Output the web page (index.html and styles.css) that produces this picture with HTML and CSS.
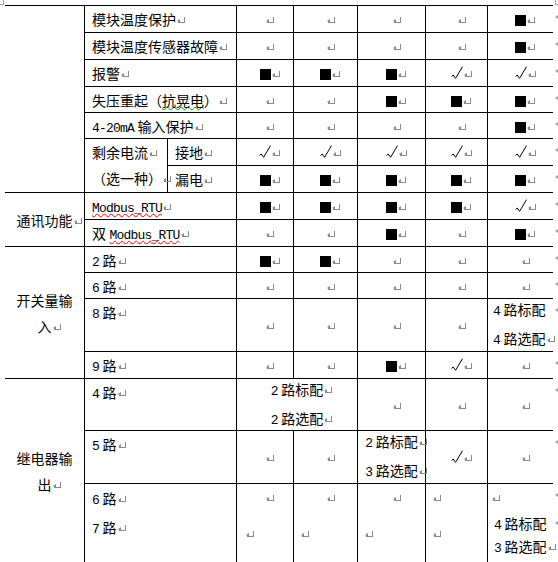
FILE: index.html
```html
<!DOCTYPE html>
<html lang="zh-CN">
<head>
<meta charset="utf-8">
<title>功能对照表</title>
<link rel="stylesheet" href="styles.css">
</head>
<body>
<div class="crop"><i class="crop-l"></i><i class="crop-r"></i></div>
<div class="tbl">
  <!-- R1 -->
  <div class="c cat r7"></div>
  <div class="c lab s2">模块温度保护<i class="pm"></i></div>
  <div class="c v"><p><i class="pm"></i></p></div>
  <div class="c v"><p><i class="pm"></i></p></div>
  <div class="c v"><p><i class="pm"></i></p></div>
  <div class="c v"><p><i class="pm"></i></p></div>
  <div class="c v"><p><i class="sq"></i><i class="pm"></i></p></div>
  <div class="m"><i class="em"></i></div>
  <!-- R2 -->
  <div class="c lab s2">模块温度传感器故障<i class="pm"></i></div>
  <div class="c v"><p><i class="pm"></i></p></div>
  <div class="c v"><p><i class="pm"></i></p></div>
  <div class="c v"><p><i class="pm"></i></p></div>
  <div class="c v"><p><i class="pm"></i></p></div>
  <div class="c v"><p><i class="sq"></i><i class="pm"></i></p></div>
  <div class="m"><i class="em"></i></div>
  <!-- R3 -->
  <div class="c lab s2">报警<i class="pm"></i></div>
  <div class="c v"><p><i class="sq"></i><i class="pm"></i></p></div>
  <div class="c v"><p><i class="sq"></i><i class="pm"></i></p></div>
  <div class="c v"><p><i class="sq"></i><i class="pm"></i></p></div>
  <div class="c v"><p><svg class="ck" viewBox="0 0 12 13"><path d="M0.5 10.5 L2.2 9 L4.6 12.3 L11.5 0.6"/></svg><i class="pm"></i></p></div>
  <div class="c v"><p><svg class="ck" viewBox="0 0 12 13"><path d="M0.5 10.5 L2.2 9 L4.6 12.3 L11.5 0.6"/></svg><i class="pm"></i></p></div>
  <div class="m"><i class="em"></i></div>
  <!-- R4 -->
  <div class="c lab s2">失压重起（<span class="sp-g">抗晃电</span>）<i class="pm"></i></div>
  <div class="c v"><p><i class="pm"></i></p></div>
  <div class="c v"><p><i class="pm"></i></p></div>
  <div class="c v"><p><i class="sq"></i><i class="pm"></i></p></div>
  <div class="c v"><p><i class="sq"></i><i class="pm"></i></p></div>
  <div class="c v"><p><i class="sq"></i><i class="pm"></i></p></div>
  <div class="m"><i class="em"></i></div>
  <!-- R5 -->
  <div class="c lab s2"><span class="en as">4-20mA</span>输入保护<i class="pm"></i></div>
  <div class="c v"><p><i class="pm"></i></p></div>
  <div class="c v"><p><i class="pm"></i></p></div>
  <div class="c v"><p><i class="pm"></i></p></div>
  <div class="c v"><p><i class="pm"></i></p></div>
  <div class="c v"><p><i class="sq"></i><i class="pm"></i></p></div>
  <div class="m"><i class="em"></i></div>
  <!-- R6 -->
  <div class="c lab r2"><p>剩余电流<i class="pm"></i></p><p>（选一种）<i class="pm"></i></p></div>
  <div class="c lab">接地<i class="pm"></i></div>
  <div class="c v"><p><svg class="ck" viewBox="0 0 12 13"><path d="M0.5 10.5 L2.2 9 L4.6 12.3 L11.5 0.6"/></svg><i class="pm"></i></p></div>
  <div class="c v"><p><svg class="ck" viewBox="0 0 12 13"><path d="M0.5 10.5 L2.2 9 L4.6 12.3 L11.5 0.6"/></svg><i class="pm"></i></p></div>
  <div class="c v"><p><svg class="ck" viewBox="0 0 12 13"><path d="M0.5 10.5 L2.2 9 L4.6 12.3 L11.5 0.6"/></svg><i class="pm"></i></p></div>
  <div class="c v"><p><svg class="ck" viewBox="0 0 12 13"><path d="M0.5 10.5 L2.2 9 L4.6 12.3 L11.5 0.6"/></svg><i class="pm"></i></p></div>
  <div class="c v"><p><svg class="ck" viewBox="0 0 12 13"><path d="M0.5 10.5 L2.2 9 L4.6 12.3 L11.5 0.6"/></svg><i class="pm"></i></p></div>
  <div class="m"><i class="em"></i></div>
  <!-- R7 -->
  <div class="c lab">漏电<i class="pm"></i></div>
  <div class="c v"><p><i class="sq"></i><i class="pm"></i></p></div>
  <div class="c v"><p><i class="sq"></i><i class="pm"></i></p></div>
  <div class="c v"><p><i class="sq"></i><i class="pm"></i></p></div>
  <div class="c v"><p><i class="sq"></i><i class="pm"></i></p></div>
  <div class="c v"><p><i class="sq"></i><i class="pm"></i></p></div>
  <div class="m"><i class="em"></i></div>
  <!-- R8 -->
  <div class="c cat r2"><p>通讯功能<i class="pm"></i></p></div>
  <div class="c lab s2"><span class="en sp-r">Modbus_RTU</span><i class="pm"></i></div>
  <div class="c v"><p><i class="sq"></i><i class="pm"></i></p></div>
  <div class="c v"><p><i class="sq"></i><i class="pm"></i></p></div>
  <div class="c v"><p><i class="sq"></i><i class="pm"></i></p></div>
  <div class="c v"><p><i class="sq"></i><i class="pm"></i></p></div>
  <div class="c v"><p><svg class="ck" viewBox="0 0 12 13"><path d="M0.5 10.5 L2.2 9 L4.6 12.3 L11.5 0.6"/></svg><i class="pm"></i></p></div>
  <div class="m"><i class="em"></i></div>
  <!-- R9 -->
  <div class="c lab s2">双<span class="en asl sp-r">Modbus_RTU</span><i class="pm"></i></div>
  <div class="c v"><p><i class="pm"></i></p></div>
  <div class="c v"><p><i class="pm"></i></p></div>
  <div class="c v"><p><i class="sq"></i><i class="pm"></i></p></div>
  <div class="c v"><p><i class="pm"></i></p></div>
  <div class="c v"><p><i class="sq"></i><i class="pm"></i></p></div>
  <div class="m"><i class="em"></i></div>
  <!-- R10 -->
  <div class="c cat r4"><p>开关量输<br>入<i class="pm"></i></p></div>
  <div class="c lab s2"><span class="en as">2</span>路<i class="pm"></i></div>
  <div class="c v"><p><i class="sq"></i><i class="pm"></i></p></div>
  <div class="c v"><p><i class="sq"></i><i class="pm"></i></p></div>
  <div class="c v"><p><i class="pm"></i></p></div>
  <div class="c v"><p><i class="pm"></i></p></div>
  <div class="c v"><p><i class="pm"></i></p></div>
  <div class="m"><i class="em"></i></div>
  <!-- R11 -->
  <div class="c lab s2"><span class="en as">6</span>路<i class="pm"></i></div>
  <div class="c v"><p><i class="pm"></i></p></div>
  <div class="c v"><p><i class="pm"></i></p></div>
  <div class="c v"><p><i class="pm"></i></p></div>
  <div class="c v"><p><i class="pm"></i></p></div>
  <div class="c v"><p><i class="pm"></i></p></div>
  <div class="m"><i class="em"></i></div>
  <!-- R12 -->
  <div class="c lab s2"><span class="en as">8</span>路<i class="pm"></i></div>
  <div class="c v"><p><i class="pm"></i></p></div>
  <div class="c v"><p><i class="pm"></i></p></div>
  <div class="c v"><p><i class="pm"></i></p></div>
  <div class="c v"><p><i class="pm"></i></p></div>
  <div class="c v left"><p><span class="en as">4</span>路标配<br><span class="en as">4</span>路选配<i class="pm"></i></p></div>
  <div class="m"><i class="em"></i></div>
  <!-- R13 -->
  <div class="c lab s2"><span class="en as">9</span>路<i class="pm"></i></div>
  <div class="c v"><p><i class="pm"></i></p></div>
  <div class="c v"><p><i class="pm"></i></p></div>
  <div class="c v"><p><i class="sq"></i><i class="pm"></i></p></div>
  <div class="c v"><p><svg class="ck" viewBox="0 0 12 13"><path d="M0.5 10.5 L2.2 9 L4.6 12.3 L11.5 0.6"/></svg><i class="pm"></i></p></div>
  <div class="c v"><p><i class="pm"></i></p></div>
  <div class="m"><i class="em"></i></div>
  <!-- R14 -->
  <div class="c cat r3"><p>继电器输<br>出<i class="pm"></i></p></div>
  <div class="c lab s2"><span class="en as">4</span>路<i class="pm"></i></div>
  <div class="c v s2"><p><span class="en as">2</span>路标配<i class="pm"></i></p><p><span class="en as">2</span>路选配<i class="pm"></i></p></div>
  <div class="c v"><p><i class="pm"></i></p></div>
  <div class="c v"><p><i class="pm"></i></p></div>
  <div class="c v"><p><i class="pm"></i></p></div>
  <div class="m"><i class="em"></i></div>
  <!-- R15 -->
  <div class="c lab s2"><span class="en as">5</span>路<i class="pm"></i></div>
  <div class="c v"><p><i class="pm"></i></p></div>
  <div class="c v"><p><i class="pm"></i></p></div>
  <div class="c v"><p><span class="en as">2</span>路标配<i class="pm"></i></p><p><span class="en as">3</span>路选配<i class="pm"></i></p></div>
  <div class="c v"><p><svg class="ck" viewBox="0 0 12 13"><path d="M0.5 10.5 L2.2 9 L4.6 12.3 L11.5 0.6"/></svg><i class="pm"></i></p></div>
  <div class="c v"><p><i class="pm"></i></p></div>
  <div class="m"><i class="em"></i></div>
  <!-- R16 -->
  <div class="c lab s2 last"><p><span class="en as">6</span>路<i class="pm"></i></p><p><span class="en as">7</span>路<i class="pm"></i></p></div>
  <div class="c lw"><p class="tc"><i class="pm"></i></p><p class="p2 w7"><i class="pm"></i></p></div>
  <div class="c lw"><p class="tc"><i class="pm"></i></p><p class="p2"><i class="pm"></i></p></div>
  <div class="c lw"><p class="tc"><i class="pm"></i></p><p class="p2"><i class="pm"></i></p></div>
  <div class="c lw"><p class="tl"><i class="pm"></i></p><p class="p2"><i class="pm"></i></p></div>
  <div class="c lw"><p class="tl t3"><i class="pm"></i></p><p class="cfg"><span class="en as">4</span>路标配<br><span class="en as">3</span>路选配<i class="pm"></i></p></div>
  <div class="m"><i class="em"></i><i class="em em2"></i></div>
</div>
</body>
</html>
```

FILE: styles.css
```css
* { box-sizing: border-box; }

html, body {
  margin: 0;
  padding: 0;
  background: #fff;
}

body {
  width: 558px;
  height: 562px;
  overflow: hidden;
  font-family: "Noto Sans CJK SC", "Noto Sans", sans-serif;
  font-size: 14px;
  color: #000;
}

p { margin: 0; }

/* Word text-boundary crop marks */
.crop {
  display: flex;
  justify-content: space-between;
  height: 5px;
}
.crop-l {
  width: 4px;
  height: 5px;
  border-right: 1px solid #a8a8a8;
  border-bottom: 1px solid #a8a8a8;
}
.crop-r {
  width: 3px;
  height: 5px;
  border-left: 1px solid #a8a8a8;
  border-bottom: 1px solid #a8a8a8;
}

/* table grid */
.tbl {
  margin-left: 5px;
  display: grid;
  grid-template-columns: 79px 83px 69px 57px 64px 68px 62px 66px 5px;
  grid-template-rows: 27px 27px 27px 26px 26px 27px 27px 27px 27px 26px 26px 53px 27px 52px 53px 79px;
  line-height: 26px;
  white-space: nowrap;
}

.c {
  border-top: 1px solid #000;
  border-left: 1px solid #000;
}

.s2 { grid-column: span 2; }
.r2 { grid-row: span 2; }
.r3 { grid-row: span 3; }
.r4 { grid-row: span 4; }
.r7 { grid-row: span 7; }

.cat {
  border-left: 0;
  display: flex;
  flex-direction: column;
  justify-content: center;
  text-align: center;
}

.lab { padding-left: 7px; }
.lab.last { padding-top: 1px; }

.v {
  display: flex;
  flex-direction: column;
  justify-content: center;
  text-align: center;
}
.v.left {
  text-align: left;
  padding-left: 5px;
}

/* last row value cells */
.lw { padding-top: 0; }
.lw .tc { text-align: center; }
.lw .tl { padding-left: 6px; }
.lw .tl.t3 { padding-left: 3px; }
.lw .p2 {
  margin-top: 10px;
  padding-left: 6px;
}
.lw .p2.w7 { padding-left: 8px; }
.lw .cfg {
  margin-top: 3px;
  padding-left: 6px;
  line-height: 21px;
}

/* latin runs (half-width, with Asian/Latin auto space) */
.en {
  font-family: "Liberation Mono", "DejaVu Sans Mono", monospace;
  font-size: 13px;
  letter-spacing: -0.8px;
}
.as { margin-right: 3.5px; }
.asl { margin-left: 3.5px; }

/* spelling / grammar squiggles */
.sp-r {
  text-decoration: underline wavy #ff0000;
  text-decoration-thickness: 1px;
  text-underline-offset: 1px;
}
.sp-g {
  text-decoration: underline wavy #00a000;
  text-decoration-thickness: 1px;
  text-underline-offset: 0px;
}

/* paragraph mark */
.pm {
  display: inline-block;
  position: relative;
  width: 0;
  height: 0;
}
.pm::before {
  content: "";
  position: absolute;
  left: 2px;
  top: -8px;
  width: 6px;
  height: 5px;
  border-right: 1px solid #8a8a8a;
  border-bottom: 1px solid #8a8a8a;
}
.pm::after {
  content: "";
  position: absolute;
  left: 1px;
  top: -6px;
  width: 0;
  height: 0;
  border-right: 3px solid #8a8a8a;
  border-top: 2.5px solid transparent;
  border-bottom: 2.5px solid transparent;
}

/* black square */
.sq {
  display: inline-block;
  width: 11px;
  height: 11px;
  background: #000;
  vertical-align: -1px;
}

/* check mark */
.ck {
  width: 12px;
  height: 13px;
  vertical-align: 0;
  fill: none;
  stroke: #000;
  stroke-width: 1;
}

/* end-of-row marks */
.m {
  padding-top: 10px;
  padding-left: 2px;
}
.em {
  display: block;
  width: 0;
  height: 0;
  border-right: 3px solid #a0a0a0;
  border-top: 2px solid transparent;
  border-bottom: 2px solid transparent;
}
.em2 { margin-top: 24px; }
```
